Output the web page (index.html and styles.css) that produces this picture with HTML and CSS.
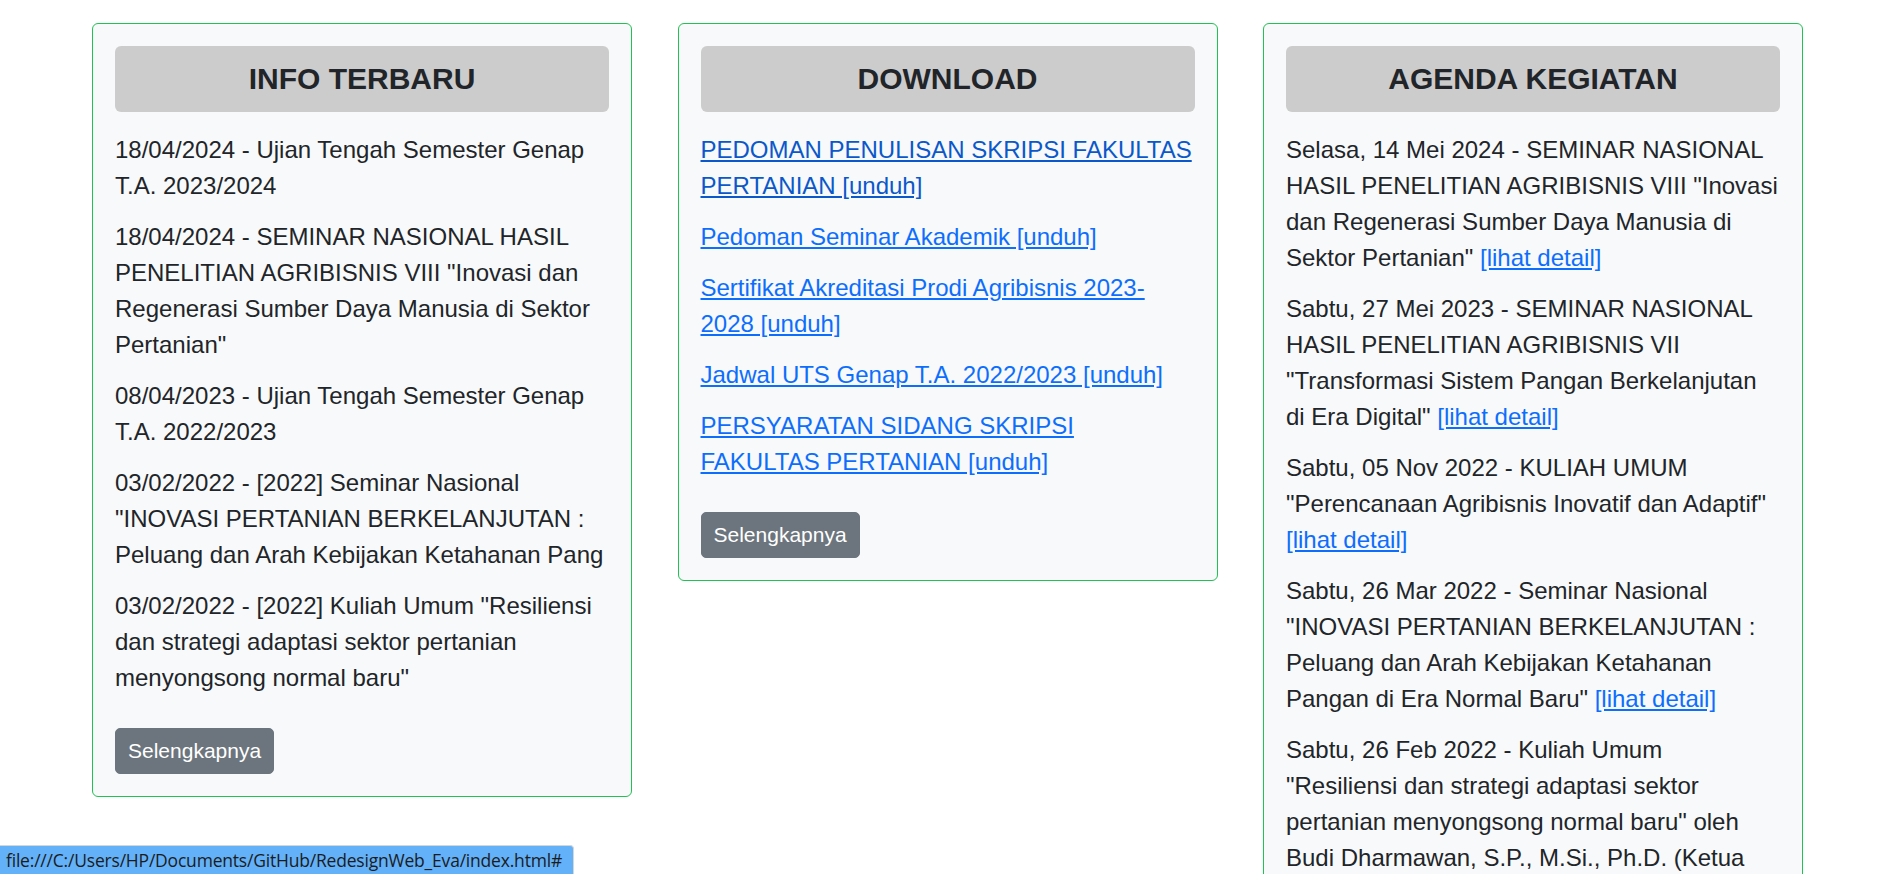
FILE: index.html
```html
<!DOCTYPE html>
<html lang="id">
<head>
<meta charset="utf-8">
<title>Fakultas Pertanian</title>
<link rel="stylesheet" href="styles.css">
</head>
<body>
<main class="row">
  <section class="card">
    <h2 class="card-title">INFO TERBARU</h2>
    <div class="list">
      <p>18/04/2024 - Ujian Tengah Semester Genap T.A. 2023/2024</p>
      <p>18/04/2024 - SEMINAR NASIONAL HASIL PENELITIAN AGRIBISNIS VIII "Inovasi dan Regenerasi Sumber Daya Manusia di Sektor Pertanian"</p>
      <p>08/04/2023 - Ujian Tengah Semester Genap T.A. 2022/2023</p>
      <p>03/02/2022 - [2022] Seminar Nasional "INOVASI PERTANIAN BERKELANJUTAN : Peluang dan Arah Kebijakan Ketahanan Pang</p>
      <p>03/02/2022 - [2022] Kuliah Umum "Resiliensi dan strategi adaptasi sektor pertanian menyongsong normal baru"</p>
    </div>
    <a class="btn" href="#">Selengkapnya</a>
  </section>

  <section class="card">
    <h2 class="card-title">DOWNLOAD</h2>
    <div class="list">
      <p><a href="#" class="visited">PEDOMAN PENULISAN SKRIPSI FAKULTAS PERTANIAN [unduh]</a></p>
      <p><a href="#">Pedoman Seminar Akademik [unduh]</a></p>
      <p><a href="#">Sertifikat Akreditasi Prodi Agribisnis 2023-2028 [unduh]</a></p>
      <p><a href="#">Jadwal UTS Genap T.A. 2022/2023 [unduh]</a></p>
      <p><a href="#">PERSYARATAN SIDANG SKRIPSI FAKULTAS PERTANIAN [unduh]</a></p>
    </div>
    <a class="btn" href="#">Selengkapnya</a>
  </section>

  <section class="card">
    <h2 class="card-title">AGENDA KEGIATAN</h2>
    <div class="list">
      <p>Selasa, 14 Mei 2024 - SEMINAR NASIONAL HASIL PENELITIAN AGRIBISNIS VIII "Inovasi dan Regenerasi Sumber Daya Manusia di Sektor Pertanian" <a href="#">[lihat detail]</a></p>
      <p>Sabtu, 27 Mei 2023 - SEMINAR NASIONAL HASIL PENELITIAN AGRIBISNIS VII "Transformasi Sistem Pangan Berkelanjutan di Era Digital" <a href="#">[lihat detail]</a></p>
      <p>Sabtu, 05 Nov 2022 - KULIAH UMUM "Perencanaan Agribisnis Inovatif dan Adaptif" <a href="#">[lihat detail]</a></p>
      <p>Sabtu, 26 Mar 2022 - Seminar Nasional "INOVASI PERTANIAN BERKELANJUTAN : Peluang dan Arah Kebijakan Ketahanan Pangan di Era Normal Baru" <a href="#">[lihat detail]</a></p>
      <p>Sabtu, 26 Feb 2022 - Kuliah Umum "Resiliensi dan strategi adaptasi sektor pertanian menyongsong normal baru" oleh Budi Dharmawan, S.P., M.Si., Ph.D. (Ketua Program Studi Agribisnis) <a href="#">[lihat detail]</a></p>
    </div>
    <a class="btn" href="#">Selengkapnya</a>
  </section>
</main>
<div class="status-bubble">file:///C:/Users/HP/Documents/GitHub/RedesignWeb_Eva/index.html#</div>
</body>
</html>
```

FILE: styles.css
```css
html, body {
  margin: 0;
  padding: 0;
  background: #ffffff;
}

body {
  font-family: "Liberation Sans", Arial, sans-serif;
  font-size: 24px;
  line-height: 1.5;
  color: #212529;
}

.row {
  display: flex;
  align-items: flex-start;
  gap: 45.5px;
  padding: 23px 0 40px 92px;
}

.card {
  box-sizing: border-box;
  width: 540px;
  flex: 0 0 540px;
  padding: 22px;
  background: #f8f9fa;
  border: 1px solid #20c252;
  border-radius: 6px;
}

.card-title {
  margin: 0 0 20px;
  padding: 15px 0;
  background: #cccccc;
  border-radius: 6px;
  font-size: 30px;
  font-weight: 700;
  line-height: 36px;
  text-align: center;
  color: #212529;
}

.list {
  margin-bottom: 32px;
}

.list p {
  margin: 0 0 15px;
}

.list p:last-child {
  margin-bottom: 0;
}

a {
  color: #0d6efd;
  text-decoration: underline;
}

a.visited {
  color: #0a58ca;
}

.btn {
  display: inline-block;
  padding: 6px 12px;
  font-size: 21px;
  line-height: 31.5px;
  color: #ffffff;
  background: #6c757d;
  border: 1px solid #6c757d;
  border-radius: 5px;
  text-decoration: none;
}

.status-bubble {
  position: fixed;
  left: 0;
  bottom: 0;
  width: 574px;
  height: 29px;
  box-sizing: border-box;
  padding: 0 0 0 6px;
  background: #63b1f9;
  border-top: 1px solid #d6d6d6;
  border-right: 1px solid #d6d6d6;
  border-top-right-radius: 4px;
  font-family: "Open Sans", "Noto Sans", sans-serif;
  font-size: 17.5px;
  letter-spacing: -0.2px;
  line-height: 28px;
  color: #1c1c1c;
  white-space: nowrap;
  overflow: hidden;
}
```
